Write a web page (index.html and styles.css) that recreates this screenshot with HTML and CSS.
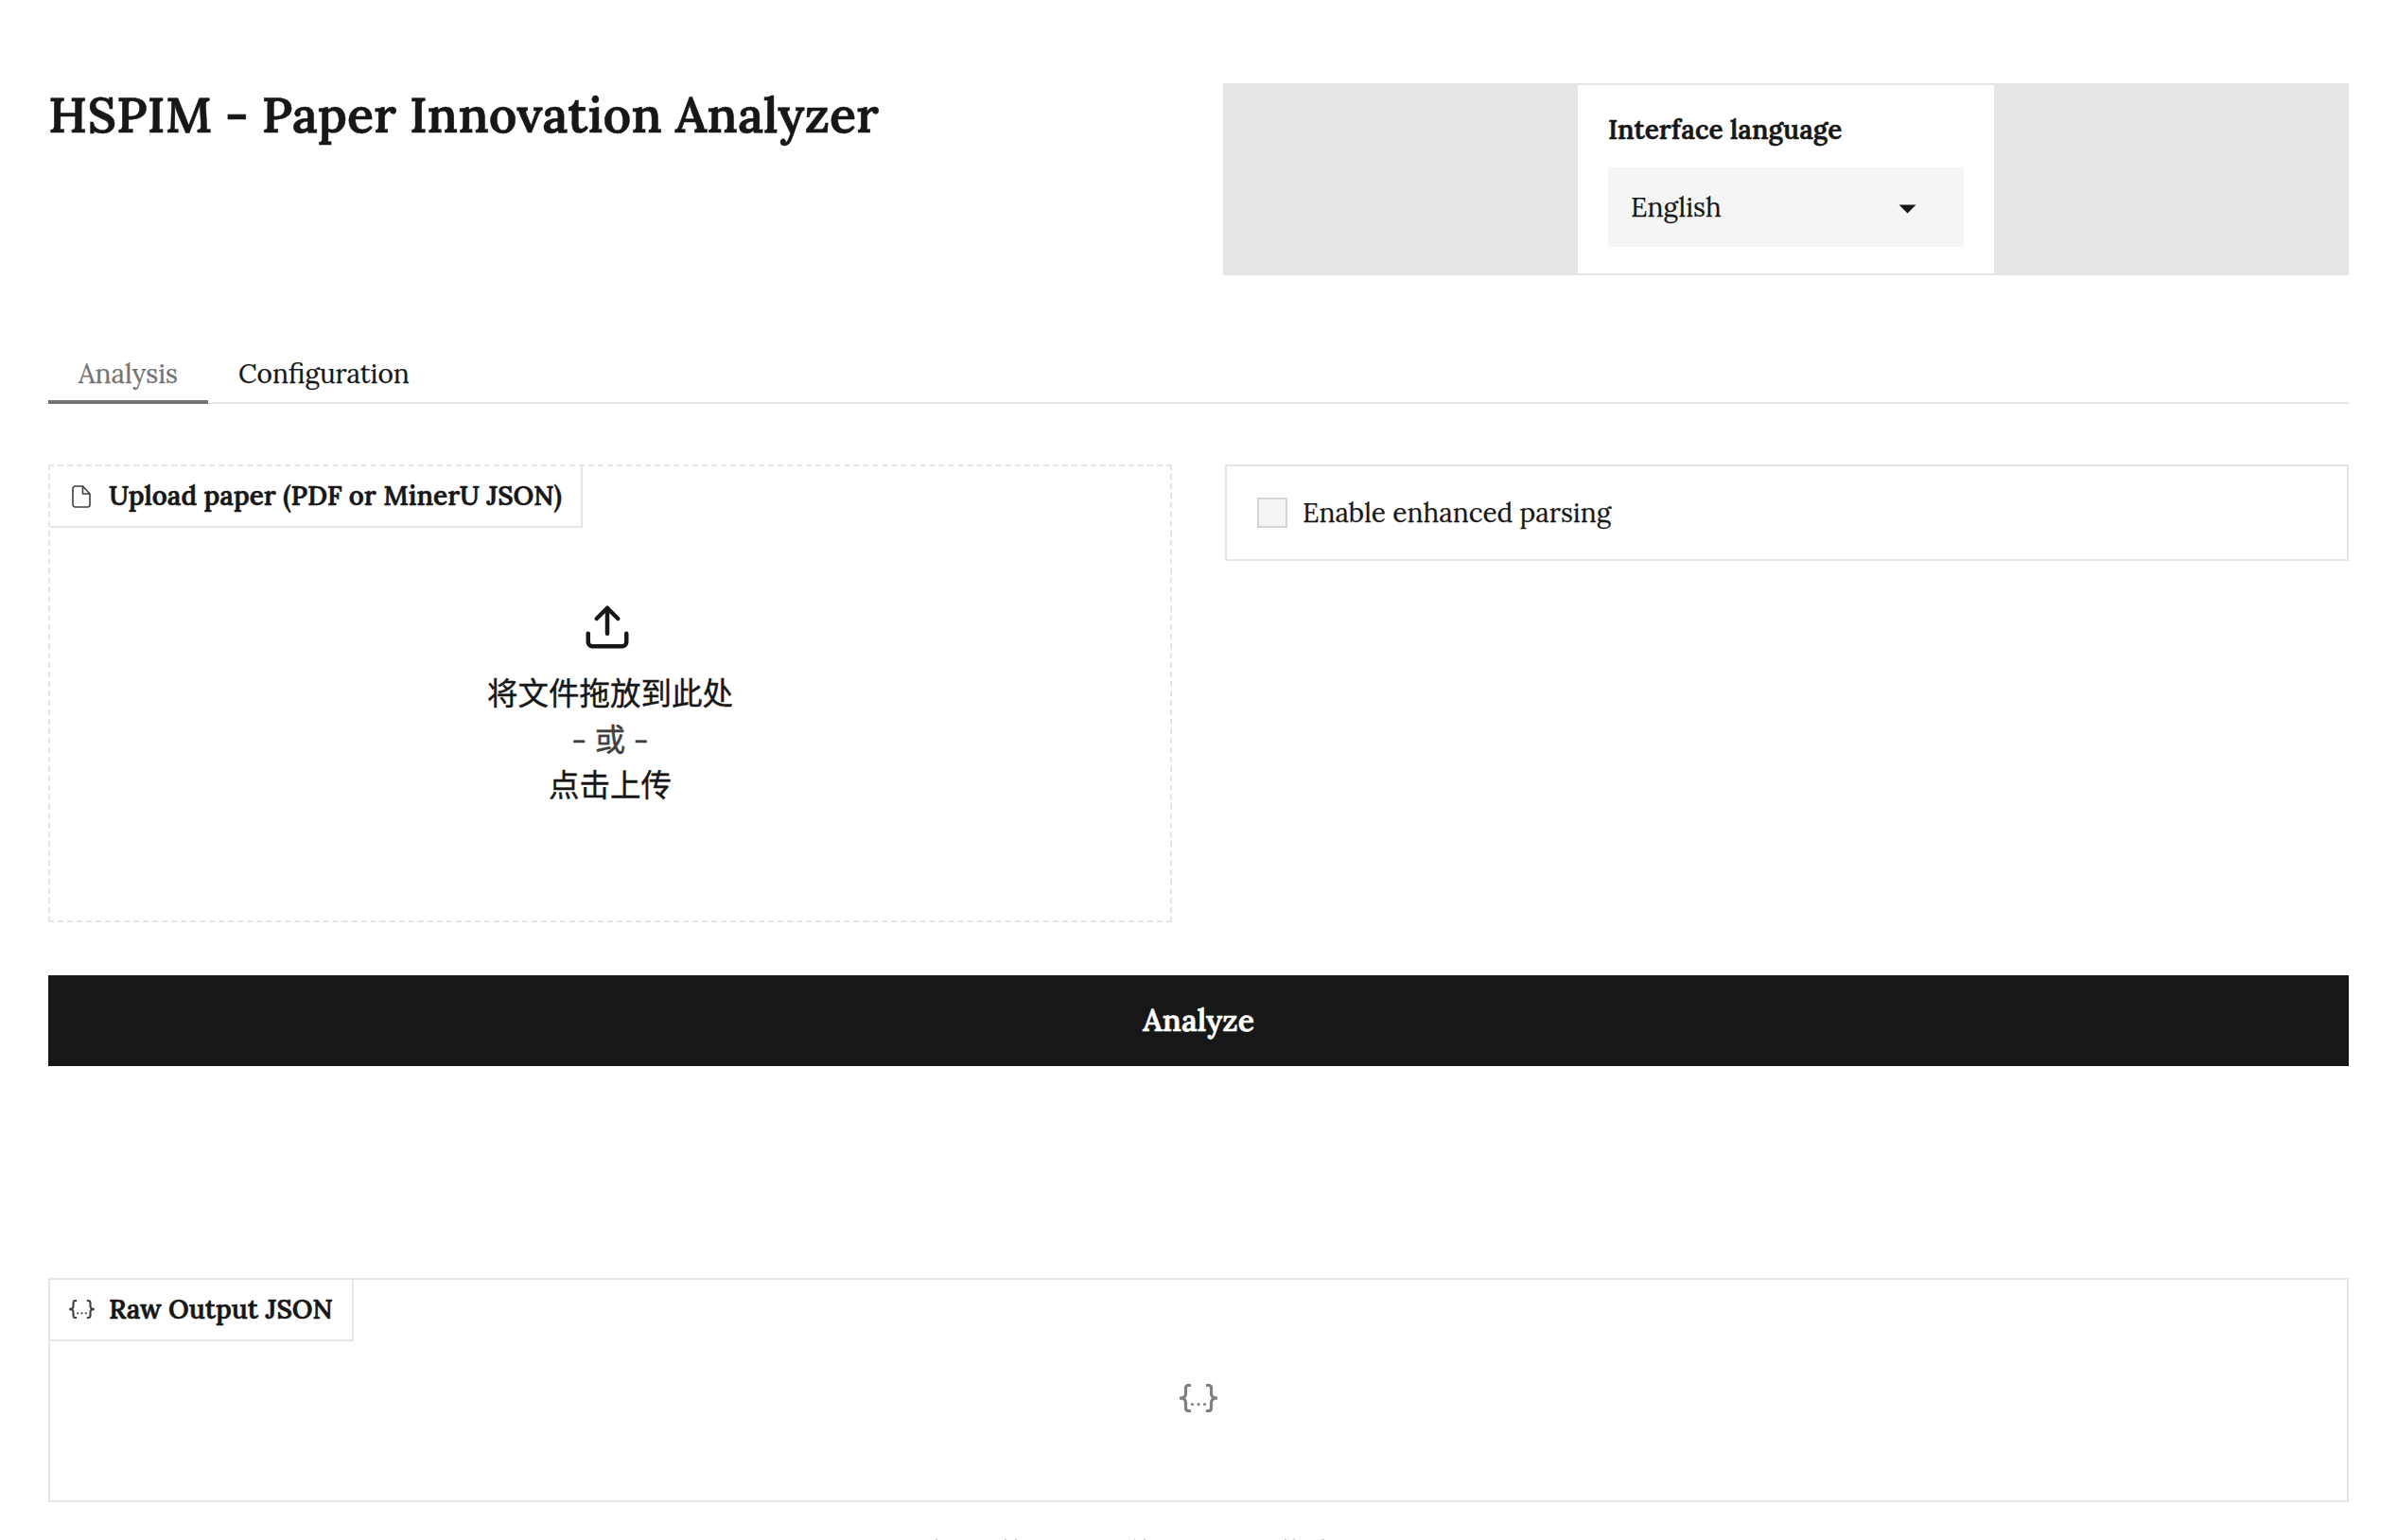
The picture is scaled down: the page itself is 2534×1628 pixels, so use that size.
FILE: index.html
```html
<!DOCTYPE html>
<html lang="en">
<head>
<meta charset="utf-8">
<title>HSPIM - Paper Innovation Analyzer</title>
<link rel="stylesheet" href="styles.css">
</head>
<body>
<main class="app">
  <header class="header">
    <h1 class="title">HSPIM - Paper Innovation Analyzer</h1>
    <div class="lang-row">
      <div class="lang-box">
        <div class="lang-label">Interface language</div>
        <div class="select">
          <span>English</span>
          <svg class="caret" viewBox="0 0 20 10"><path d="M0.5 0.3h19L10 9.7z"/></svg>
        </div>
      </div>
    </div>
  </header>

  <nav class="tabs">
    <div class="tab tab-active">Analysis</div>
    <div class="tab">Configuration</div>
  </nav>

  <section class="inputs">
    <div class="upload">
      <div class="label label-upload">
        <svg class="icon-file" viewBox="0 0 20 24" fill="none" stroke="#404040" stroke-width="1.6" stroke-linejoin="round"><path d="M11.500 1H3.500A2.500 2.500 0 0 0 1 3.500v17A2.500 2.500 0 0 0 3.500 23h13A2.500 2.500 0 0 0 19 20.500V9zM11.500 1v8H19"/></svg>
        <span>Upload paper (PDF or MinerU JSON)</span>
      </div>
      <div class="drop">
        <svg class="icon-upload" viewBox="0 0 24 24" fill="none" stroke="#171717" stroke-width="2" stroke-linecap="round" stroke-linejoin="round"><path d="M21 15v4a2 2 0 0 1-2 2H5a2 2 0 0 1-2-2v-4M17 8l-5-5-5 5M12 3v12"/></svg>
        <div>将文件拖放到此处</div>
        <div class="or">- 或 -</div>
        <div>点击上传</div>
      </div>
    </div>
    <div class="option">
      <span class="checkbox"></span>
      <span>Enable enhanced parsing</span>
    </div>
  </section>

  <button class="analyze">Analyze</button>

  <section class="json">
    <div class="label label-json">
      <svg class="icon-json" viewBox="0 0 40 30"><path class="brace" d="M12 1.500H9.500Q6.500 1.500 6.500 4.500V10.500Q6.500 15 0 15Q6.500 15 6.500 19.500V25.500Q6.500 28.500 9.500 28.500H12M28 1.500h2.500Q33.500 1.500 33.500 4.500V10.500Q33.500 15 40 15Q33.500 15 33.500 19.500V25.500Q33.500 28.500 30.500 28.500H28"/><circle cx="13.500" cy="21.500" r="1.600"/><circle cx="20" cy="21.500" r="1.600"/><circle cx="26.500" cy="21.500" r="1.600"/></svg>
      <span>Raw Output JSON</span>
    </div>
    <div class="empty">
      <svg class="icon-json-large" viewBox="0 0 40 30"><path class="brace" d="M12 1.500H9.500Q6.500 1.500 6.500 4.500V10.500Q6.500 15 0 15Q6.500 15 6.500 19.500V25.500Q6.500 28.500 9.500 28.500H12M28 1.500h2.500Q33.500 1.500 33.500 4.500V10.500Q33.500 15 40 15Q33.500 15 33.500 19.500V25.500Q33.500 28.500 30.500 28.500H28"/><circle cx="13.500" cy="21.500" r="1.600"/><circle cx="20" cy="21.500" r="1.600"/><circle cx="26.500" cy="21.500" r="1.600"/></svg>
    </div>
  </section>

  <footer class="footer">
    <svg class="footer-edge" viewBox="0 0 420 1" fill="#c4c4c4"><path d="M9 0h2v1h-2zM82 0h2v1h-2zM93 0h2v1h-2zM219 0h1v1h-1zM229 0h2v1h-2zM378 0h2v1h-2zM387 0h2v1h-2zM417 0h3v1h-3z"/></svg>
  </footer>
</main>
</body>
</html>
```
FILE: styles.css
```css
* { box-sizing: border-box; }
body {
  margin: 0;
  background: #fff;
  color: #171717;
  font-family: "Lora", "Noto Sans CJK SC", serif;
  font-size: 28px;
  overflow: hidden;
}
svg { display: block; flex: none; }
span { white-space: nowrap; }
.app {
  display: flex;
  flex-direction: column;
  width: 2534px;
  height: 1628px;
  padding: 88px 51px 0;
}

.header { display: flex; justify-content: space-between; height: 203px; }
.title {
  margin: 0;
  font-size: 52px;
  line-height: 67px;
  font-weight: 600;
}
.title, .lang-label, .label, .analyze { -webkit-text-stroke: 0.5px currentColor; }
.lang-row {
  display: flex;
  justify-content: center;
  width: 1190px;
  padding: 2px 0;
  background: #e5e5e5;
}
.lang-box { width: 440px; padding: 29px 32px 0; background: #fff; }
.lang-label { height: 58px; line-height: 37px; font-weight: 600; }
.select {
  display: flex;
  align-items: center;
  justify-content: space-between;
  height: 84px;
  padding: 0 50px 0 24px;
  background: #f5f5f5;
}
.caret { width: 19px; height: 10px; margin-top: 4px; fill: #171717; }

.tabs {
  display: flex;
  height: 64px;
  margin-top: 72px;
  box-shadow: inset 0 -2px #e5e5e5;
}
.tab { padding: 13px 32px 0; line-height: 38px; color: #171717; }
.tab-active {
  width: 169px;
  color: #737373;
  border-bottom: 4px solid #737373;
}
.tab, .select, .option { -webkit-text-stroke: 0.25px currentColor; }

.inputs {
  display: flex;
  justify-content: space-between;
  align-items: flex-start;
  height: 484px;
  margin-top: 64px;
}
.upload { width: 1188px; height: 484px; border: 2px dashed #e5e5e5; }
.label {
  display: flex;
  align-items: center;
  height: 65px;
  padding-bottom: 1px;
  border: solid #e5e5e5;
  border-width: 0 2px 2px 0;
  font-weight: 600;
}
.label-upload { width: 563px; padding-left: 23px; gap: 19px; }
.icon-file { width: 20px; height: 24px; margin-top: 2px; }
.drop {
  display: flex;
  flex-direction: column;
  align-items: center;
  padding-top: 78px;
  font-size: 32.5px;
  line-height: 48.5px;
  -webkit-text-stroke: 0.4px currentColor;
}
.icon-upload { width: 54px; height: 54px; margin: 0 6px 19px 0; }
.or { color: #404040; }
.option {
  display: flex;
  align-items: center;
  gap: 16px;
  width: 1188px;
  height: 102px;
  padding-left: 32px;
  border: 2px solid #e5e5e5;
}
.checkbox { width: 32px; height: 32px; border: 2px solid #d4d4d4; background: #f5f5f5; }

.analyze {
  height: 96px;
  margin-top: 56px;
  padding: 0 0 2px;
  border: 0;
  background: #171717;
  color: #fff;
  font: 600 32px "Lora", serif;
}

.json { height: 237px; margin-top: 224px; border: 2px solid #e5e5e5; }
.label-json { width: 321px; padding-left: 20px; gap: 15px; }
.brace { fill: none; stroke: currentColor; stroke-width: 3.2; }
.icon-json { width: 27px; height: 20px; color: #404040; fill: #404040; }
.icon-json-large { width: 40px; height: 30px; color: #808080; fill: #808080; }
.empty { display: flex; justify-content: center; padding-top: 45px; }

.footer { display: flex; justify-content: center; height: 40px; padding-top: 39px; }
.footer-edge { width: 420px; height: 1px; margin-right: 154px; }
```
